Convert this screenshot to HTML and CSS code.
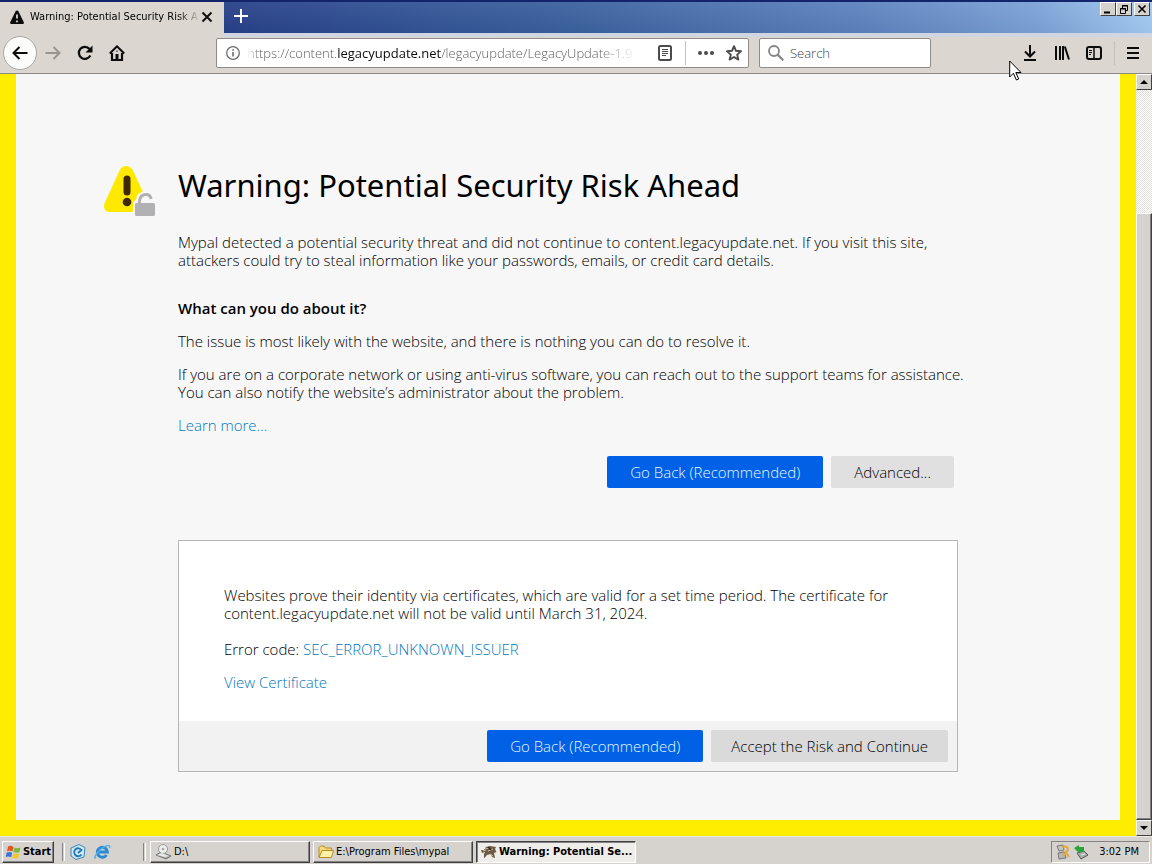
FILE: index.html
```
<!DOCTYPE html>
<html lang="en">
<head>
<meta charset="UTF-8">
<meta name="viewport" content="width=device-width, initial-scale=1.0">
<title>Warning: Potential Security Risk Ahead</title>
<link rel="stylesheet" href="styles.css">
</head>
<body>
<header class="titlebar">
<div class="tab">
<svg width="14" height="14" viewBox="0 0 14 14"><path d="M7 0.5C7.7 0.5 8.2 0.9 8.5 1.5L13.7 12C14.1 13 13.6 14 12.5 14H1.5C.4 14-.1 13 .3 12L5.5 1.5C5.8.9 6.3.5 7 .5Z" fill="#0c0c0d"/><path d="M7 4.5V8.5M7 10.5V12.2" stroke="#dbd7d0" stroke-width="1.8"/></svg>
<span class="tab-title">Warning: Potential Security Risk A</span>
<button class="tab-close" aria-label="Close tab"><svg width="12" height="12" viewBox="0 0 12 12"><path d="M1.5 1.5L10.5 10.5M10.5 1.5L1.5 10.5" stroke="#111" stroke-width="2"/></svg></button>
</div>
<button class="new-tab" aria-label="New tab"><svg width="14" height="14" viewBox="0 0 14 14"><path d="M7 0V14M0 7H14" stroke="#fff" stroke-width="2"/></svg></button>
<div class="window-buttons">
<button aria-label="Minimize"><svg width="12" height="11" viewBox="0 0 12 11"><path d="M2 8.5H8" stroke="#000" stroke-width="2"/></svg></button>
<button aria-label="Restore"><svg width="12" height="11" viewBox="0 0 12 11"><path d="M4.5 4V1.5H9.5V6.5H8M4 2H10M2.5 4.5H7.5V9.5H2.5ZM2 5H8" fill="none" stroke="#000"/></svg></button>
<button class="close" aria-label="Close"><svg width="12" height="11" viewBox="0 0 12 11"><path d="M2.5 1.5L9.5 8.5M9.5 1.5L2.5 8.5" stroke="#000" stroke-width="1.6"/></svg></button>
</div>
</header>

<nav class="toolbar">
<button class="back" aria-label="Back"><svg width="16" height="16" viewBox="0 0 16 16"><path d="M15.500 8H1.500M7.500 2L1.500 8L7.500 14" fill="none" stroke="#0c0c0d" stroke-width="2"/></svg></button>
<button class="tool" aria-label="Forward"><svg width="16" height="16" viewBox="0 0 16 16"><path d="M0.500 8H14.500M8.500 2L14.500 8L8.500 14" fill="none" stroke="#98958f" stroke-width="2"/></svg></button>
<button class="tool" aria-label="Reload"><svg width="16" height="16" viewBox="0 0 16 16"><path d="M12.500 4A6 6 0 1 0 13.300 10.500" fill="none" stroke="#0c0c0d" stroke-width="2.300"/><path d="M15.500 0.500V7.500H8.500Z" fill="#0c0c0d"/></svg></button>
<button class="tool" aria-label="Home"><svg width="16" height="16" viewBox="0 0 16 16"><path d="M0.800 8.500L8 1.300L15.200 8.500" fill="none" stroke="#0c0c0d" stroke-width="2"/><path d="M3 8V15H13V8" fill="none" stroke="#0c0c0d" stroke-width="2.200"/><path d="M6.500 15V9H9.500V15Z" fill="#0c0c0d"/><path d="M7.500 5.500H8.500V7H7.500Z" fill="#0c0c0d"/></svg></button>

<div class="urlbar">
<svg width="14" height="14" viewBox="0 0 14 14"><circle cx="7" cy="7" r="6.300" fill="none" stroke="#6d6d6d" stroke-width="1.300"/><path d="M7 6V10.500M7 3.200V4.800" stroke="#6d6d6d" stroke-width="1.600"/></svg>
<div class="url" role="textbox" aria-label="Address" contenteditable="true" spellcheck="false">https://content.<span class="domain">legacyupdate.net</span>/legacyupdate/LegacyUpdate-1.9</div>
<svg class="reader" width="14" height="16" viewBox="0 0 14 16"><rect x="1" y="1" width="12" height="14" rx="1.500" fill="none" stroke="#4b4b4d" stroke-width="2"/><path d="M4 4.500H10M4 6.500H10M4 8.500H10M4 10.500H8" stroke="#4b4b4d"/></svg>
<span class="divider"></span>
<svg width="16" height="16" viewBox="0 0 16 16"><circle cx="2" cy="8" r="2" fill="#4b4b4d"/><circle cx="8" cy="8" r="2" fill="#4b4b4d"/><circle cx="14" cy="8" r="2" fill="#4b4b4d"/></svg>
<svg class="star" width="16" height="16" viewBox="0 0 16 16"><path d="M8 1.200L10 5.800L15 6.300L11.200 9.600L12.400 14.600L8 12L3.600 14.600L4.800 9.600L1 6.300L6 5.800Z" fill="none" stroke="#4b4b4d" stroke-width="1.900" stroke-linejoin="round"/></svg>
</div>

<label class="search">
<svg width="16" height="16" viewBox="0 0 16 16"><circle cx="6" cy="6" r="5" fill="none" stroke="#858585" stroke-width="1.800"/><path d="M9.600 9.600L15.300 15.300" stroke="#858585" stroke-width="2.200"/></svg>
<input type="text" placeholder="Search" aria-label="Search">
</label>

<div class="toolbar-end">
<button class="tool" aria-label="Downloads"><svg width="16" height="16" viewBox="0 0 16 16"><path d="M8 0V11M3 6.500L8 11.500L13 6.500M2 15H14" fill="none" stroke="#0c0c0d" stroke-width="2"/></svg></button>
<button class="tool" aria-label="Library"><svg width="16" height="16" viewBox="0 0 16 16"><path d="M2 1V15M6 1V15M9 1V15M10.800 1.500L15 14.500" stroke="#0c0c0d" stroke-width="2"/></svg></button>
<button class="tool" aria-label="Sidebars"><svg width="16" height="16" viewBox="0 0 16 16"><rect x="1" y="2" width="14" height="12" rx="2" fill="none" stroke="#0c0c0d" stroke-width="2"/><path d="M8 2V14" stroke="#0c0c0d" stroke-width="1.500"/><path d="M3 5.500H6M3 7.500H6M3 9.500H5" stroke="#0c0c0d"/></svg></button>
<span class="divider"></span>
<button class="tool" aria-label="Menu"><svg width="16" height="16" viewBox="0 0 16 16"><path d="M2 3H14M2 8H14M2 13H14" stroke="#0c0c0d" stroke-width="2"/></svg></button>
</div>
</nav>

<div class="viewport">
<main class="page">
<svg class="warning-icon" width="52" height="52" viewBox="0 0 52 52"><path d="M22 1C25 1 27.500 2.800 29 5.500L44 38C46 43 43 47 38.500 47H6C1.500 47-1.300 43 .700 38L15.500 5.500C17 2.500 19.500 1 22 1Z" fill="#ffe900"/><path d="M23 14V27" stroke="#3e2800" stroke-width="7" stroke-linecap="round"/><circle cx="23" cy="37" r="4.300" fill="#3e2800"/><path d="M29 54V39Q29 36 32 35Q32 27 41 26.500Q50 27 50 36H54V54Z" fill="#f7f7f7"/><rect x="31" y="38" width="20" height="13" rx="1.500" fill="#b1b1b3"/><path d="M35.500 39V35.500Q36.500 29.500 42 29.500Q46.500 29.500 47 34" fill="none" stroke="#b1b1b3" stroke-width="3"/></svg>
<div class="content">
<h1>Warning: Potential Security Risk Ahead</h1>
<p>Mypal detected a potential security threat and did not continue to content.legacyupdate.net. If you visit this site,<br>attackers could try to steal information like your passwords, emails, or credit card details.</p>
<h2>What can you do about it?</h2>
<p>The issue is most likely with the website, and there is nothing you can do to resolve it.</p>
<p>If you are on a corporate network or using anti-virus software, you can reach out to the support teams for assistance.<br>You can also notify the website’s administrator about the problem.</p>
<p><a href="#">Learn more…</a></p>
<div class="buttons">
<button class="primary">Go Back (Recommended)</button>
<button class="secondary">Advanced...</button>
</div>

<section class="advanced">
<div class="advanced-text">
<p>Websites prove their identity via certificates, which are valid for a set time period. The certificate for<br>content.legacyupdate.net will not be valid until March 31, 2024.</p>
<p class="error-code">Error code: <a href="#">SEC_ERROR_UNKNOWN_ISSUER</a></p>
<p><a href="#">View Certificate</a></p>
</div>
<div class="advanced-buttons">
<button class="primary">Go Back (Recommended)</button>
<button class="secondary">Accept the Risk and Continue</button>
</div>
</section>
</div>
</main>
<div class="scrollbar">
<button class="scroll-button" aria-label="Scroll up"><svg width="8" height="4" viewBox="0 0 8 4"><path d="M0 4L4 0L8 4Z"/></svg></button>
<div class="scroll-track"><div class="scroll-thumb"></div></div>
<button class="scroll-button" aria-label="Scroll down"><svg width="8" height="4" viewBox="0 0 8 4"><path d="M0 0L4 4L8 0Z"/></svg></button>
</div>
</div>

<footer class="taskbar">
<button class="start"><svg width="17" height="16" viewBox="0 0 17 16"><path d="M3 2.500Q6 1 8.500 3L7.500 7.500Q5 6 2 7.200Z" fill="#e2562a"/><path d="M9.500 3.500Q12 5 15.500 3.500L14.500 8Q11.500 9.500 8.500 8Z" fill="#79b83b"/><path d="M1.700 8.500Q4.500 7.300 7.200 8.800L6.200 13.300Q3.500 12 .700 13Z" fill="#3c74d6"/><path d="M8.200 9.200Q11.500 10.700 14.200 9.300L13.200 14Q10 15.200 7.200 13.800Z" fill="#f5c52e"/></svg>Start</button>
<span class="grip"></span>
<div class="quick-launch">
<button aria-label="Outlook Express"><svg width="16" height="16" viewBox="0 0 16 16"><path d="M1 4L9 0.500L15 3.500L14 13L6 15.500L1 12Z" fill="#cde7f5" stroke="#3d86bb"/><path d="M11.500 10.500A4 4 0 1 1 11.500 6L8 9" fill="none" stroke="#2877b5" stroke-width="1.800"/></svg></button>
<button aria-label="Internet Explorer"><svg width="17" height="16" viewBox="0 0 17 16"><path d="M12.500 11A5 5 0 1 1 13.300 8H5" fill="none" stroke="#2a8ad2" stroke-width="3"/><path d="M2 13.500C-1 16 2 9 7 5S17 0 15.500 4" fill="none" stroke="#56b0e8" stroke-width="1.500"/></svg></button>
</div>
<span class="grip"></span>
<div class="tasks">
<button class="task"><svg width="17" height="16" viewBox="0 0 17 16"><path d="M1 11L6 8L16 12L11 15Z" fill="#aaa" stroke="#777"/><circle cx="8" cy="5" r="4.500" fill="#eee" stroke="#999"/><circle cx="8" cy="5" r="1.300" fill="#aaa"/><path d="M2 11L7 9L14 12L10 13Z" fill="#e8e8e8"/></svg>D:\</button>
<button class="task"><svg width="16" height="16" viewBox="0 0 16 16"><path d="M1 13V3.500L2.500 2H6L7.500 4H13.500V6.500" fill="#f7d978" stroke="#b58a26"/><path d="M1 13.500L4 6.500H15.500L13.500 13.500Z" fill="#fff0a5" stroke="#b58a26"/></svg>E:\Program Files\mypal</button>
<button class="task active"><svg width="16" height="16" viewBox="0 0 16 16"><path d="M0 6L3 6L5 3L9 2L15 3L14 5L15.500 8L13 9L14 14L11 13L10 10L6 11L3 14.500V10L4 8L1 9Z" fill="#6c5b47"/><path d="M4 5L8 4M7 7L12 5M2 7L5 6M9 10L12 12" stroke="#d0b993"/><path d="M7 3L10 6" stroke="#2c2721" stroke-width="1.500"/></svg>Warning: Potential Se...</button>
</div>
<div class="tray">
<svg width="16" height="16" viewBox="0 0 16 16"><path d="M2 2L8 1L9 6L4 7Z" fill="#c5c5c5" stroke="#777"/><path d="M3 9L9 8L11 14L4 15Z" fill="#b8b8b8" stroke="#777"/><path d="M7 3Q13 1 13 6L8 12M10 7L14 13" fill="none" stroke="#e0a83c" stroke-width="2"/></svg>
<svg width="16" height="16" viewBox="0 0 16 16"><path d="M4 9L11 7L15 11L8 15Z" fill="#a9b0ab" stroke="#555"/><path d="M1 4L6 1V3H11V8H6V9Z" fill="#29a43a"/><path d="M8 11L12 10" stroke="#e8e8e8"/></svg>
<span class="clock">3:02 PM</span>
</div>
</footer>

<svg class="cursor" width="13" height="21" viewBox="0 0 13 21"><path d="M.700 1V17L4.400 13.300L7.400 20L9.700 19L6.800 12.500H12Z" fill="#fff" stroke="#000"/></svg>
</body>
</html>
```
FILE: styles.css
```
* {
box-sizing: border-box;
}

body {
margin: 0;
height: 100vh;
display: flex;
flex-direction: column;
overflow: hidden;
background: #f7f7f7;
color: #000;
font-family: "Open Sans", Tahoma, sans-serif;
font-size: 15px;
font-weight: 300;
line-height: 18px;
}

button {
font: inherit;
color: inherit;
margin: 0;
padding: 0;
border: 0;
background: none;
display: flex;
align-items: center;
justify-content: center;
white-space: nowrap;
}

svg {
flex: none;
display: block;
}

a {
color: #0078bd;
text-decoration: none;
}

/* Tabs */
.titlebar {
height: 33px;
flex: none;
display: flex;
align-items: flex-start;
border-top: 2px solid #14246a;
background: linear-gradient(to bottom, rgba(255,255,255,.06), rgba(0,0,0,.04)), linear-gradient(to right, #172a72 0, #28428a 20%, #3b629f 50%, #5d83bf 75%, #7ca2d6 90%, #a4cbf4 100%);
}

.tab {
width: 224px;
height: 31px;
padding: 0 11px 2px 10px;
display: flex;
align-items: center;
background: #dbd7d0;
font-family: "DejaVu Sans Condensed", Tahoma, sans-serif;
font-size: 11px;
font-weight: normal;
}

.tab-title {
flex: 1;
margin: 0 0 0 6px;
overflow: hidden;
white-space: nowrap;
mask-image: linear-gradient(to right, #000 86%, transparent);
}

.new-tab {
width: 34px;
height: 28px;
}

.window-buttons {
display: flex;
margin-left: auto;
padding-right: 2px;
}

.window-buttons button {
width: 16px;
height: 14px;
background: #d6d3ce;
border: 1px solid;
border-color: #fff #404040 #404040 #fff;
}

.window-buttons .close {
margin-left: 2px;
}

/* Navigation */
.toolbar {
height: 41px;
flex: none;
display: flex;
align-items: center;
padding: 0 3px;
background: linear-gradient(#d0d5e2, #d0d5e2) 224px 0 / 100% 4px no-repeat #dbd7d0;
border-bottom: 1px solid #8d8b87;
}

.tool {
width: 32px;
height: 32px;
}

.back {
width: 34px;
height: 34px;
border: 1px solid #aaa7a2;
border-radius: 50%;
background: #fcfcfb;
}

.urlbar,
.search {
height: 30px;
display: flex;
align-items: center;
background: #fff;
border: 1px solid #908d88;
border-radius: 2px;
font-size: 13px;
}

.urlbar {
flex: 1;
min-width: 0;
margin-left: 83px;
padding: 0 6px 0 9px;
}

.url {
flex: 1;
margin: 0 20px 0 7px;
overflow: hidden;
white-space: nowrap;
outline: none;
color: #606060;
mask-image: linear-gradient(to right, transparent, #000 3%, #000 90%, transparent);
}

.domain {
color: #0c0c0d;
font-weight: normal;
}

.divider {
width: 1px;
height: 24px;
background: #c4c1bb;
}

.reader {
margin-right: 13px;
}

.urlbar .divider {
margin-right: 12px;
}

.star {
margin-left: 12px;
}

.search {
width: 172px;
margin-left: 10px;
padding: 0 8px;
gap: 6px;
}

.search input {
flex: 1;
min-width: 0;
padding: 0;
border: 0;
outline: none;
background: none;
font: inherit;
}

.search input::placeholder {
color: #404040;
}

.toolbar-end {
display: flex;
align-items: center;
margin-left: 83px;
}

.toolbar-end .divider {
margin: 0 2px 0 4px;
}

/* Error page */
.viewport {
flex: 1;
min-height: 0;
display: flex;
}

.page {
flex: 1;
display: grid;
grid-template-columns: 1fr minmax(0, 780px) 1fr;
align-items: start;
padding-top: 91px;
overflow: hidden;
border: 16px solid #ffed00;
border-top: 0;
}

.warning-icon {
justify-self: end;
margin-right: 22px;
}

h1 {
margin: 0 0 28px;
font-family: "Noto Sans", Tahoma, sans-serif;
font-size: 31px;
font-weight: normal;
line-height: 40px;
white-space: nowrap;
}

h2 {
margin: 30px 0 15px;
font-size: 15px;
font-weight: 600;
}

p {
margin: 0 0 15px;
white-space: nowrap;
}

.buttons,
.advanced-buttons {
display: flex;
justify-content: flex-end;
gap: 8px;
}

.buttons {
margin-top: 22px;
padding-right: 4px;
}

.primary,
.secondary {
height: 32px;
padding: 0 23px;
border-radius: 2px;
background: #e0e0e0;
}

.primary {
background: #0060e6;
color: #e4faff;
}

.advanced {
margin-top: 52px;
border: 1px solid #b5b5b5;
background: #fff;
}

.advanced-text {
padding: 45px 45px 15px;
}

.error-code {
margin-top: 18px;
}

.advanced-buttons {
padding: 9px;
background: #f2f2f2;
}

.advanced .secondary {
padding: 0 20px;
background: #dadada;
}

.scrollbar {
width: 16px;
flex: none;
display: flex;
flex-direction: column;
}

.scroll-button {
height: 16px;
background: #d6d3ce;
border: 1px solid;
border-color: #fff #404040 #404040 #fff;
}

.scroll-track {
flex: 1;
padding-top: 123px;
background: repeating-conic-gradient(#fff 0 25%, #e2dfda 0 50%) 0 0 / 2px 2px;
}

.scroll-thumb {
height: 100%;
background: #d6d3ce;
border: 1px solid;
border-color: #fff #404040 #404040 #fff;
box-shadow: inset -1px -1px #848284;
}

/* Taskbar */
.taskbar {
height: 28px;
flex: none;
display: flex;
align-items: center;
padding: 2px 2px 0;
background: #d6d3ce;
border-top: 1px solid #eeebe5;
font-family: "DejaVu Sans Condensed", Tahoma, sans-serif;
font-size: 11px;
font-weight: normal;
}

.start,
.task {
height: 22px;
border: 1px solid;
border-color: #fff #404040 #404040 #fff;
box-shadow: inset -1px -1px #848284;
}

.start {
width: 52px;
gap: 1px;
font-weight: bold;
}

.grip {
width: 3px;
height: 18px;
margin: 0 4px 0 8px;
border-left: 1px solid #848284;
border-right: 1px solid #fff;
}

.quick-launch {
width: 66px;
display: flex;
gap: 8px;
padding-left: 1px;
}

.tasks {
display: flex;
gap: 3px;
}

.task {
width: 160px;
padding: 0 4px;
gap: 2px;
justify-content: flex-start;
}

.task.active {
border-color: #404040 #fff #fff #404040;
box-shadow: inset 1px 1px #848284;
background: #efede9;
font-weight: bold;
}

.tray {
height: 22px;
display: flex;
align-items: center;
gap: 2px;
margin-left: auto;
padding: 0 10px 0 3px;
border: 1px solid;
border-color: #848284 #fff #fff #848284;
}

.clock {
margin-left: 8px;
}

/* Mouse pointer */
.cursor {
position: absolute;
left: 1009px;
top: 60px;
}
```
